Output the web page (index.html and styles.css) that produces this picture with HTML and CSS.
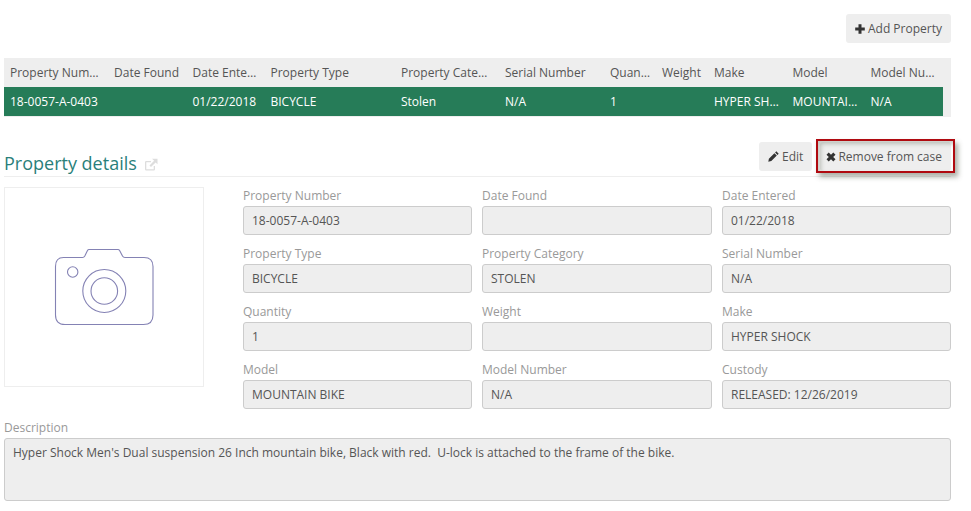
FILE: index.html
```html
<!DOCTYPE html>
<html lang="en">
<head>
<meta charset="utf-8">
<title>Property details</title>
<link rel="stylesheet" href="styles.css">
</head>
<body>
<main class="page">
  <div class="toolbar">
    <button class="btn" type="button"><svg class="ico" viewBox="0 0 10 10"><path d="M3.500 0.200h3v3.300h3.300v3H6.500v3.300h-3V6.500H0.200v-3h3.300z"/></svg>Add Property</button>
  </div>
  <div class="grid">
    <div class="grid-rows">
      <div class="row head">
        <span>Property Number</span><span>Date Found</span><span>Date Entered</span><span>Property Type</span><span>Property Category</span><span>Serial Number</span><span class="tight">Quantity</span><span>Weight</span><span>Make</span><span>Model</span><span>Model Number</span>
      </div>
      <div class="row sel">
        <span>18-0057-A-0403</span><span></span><span>01/22/2018</span><span>BICYCLE</span><span>Stolen</span><span>N/A</span><span>1</span><span></span><span>HYPER SHOCK</span><span>MOUNTAIN BIKE</span><span>N/A</span>
      </div>
    </div>
    <div class="gutter"></div>
  </div>
  <div class="details-head">
    <h2 class="title">Property details<svg class="ext" viewBox="0 0 14 14"><path d="M11 8v3.200A1.300 1.300 0 0 1 9.700 12.500H2.300A1.300 1.300 0 0 1 1 11.200V4.300A1.300 1.300 0 0 1 2.300 3H7V4.300H2.300V11.200H9.700V8zM8 0.800h5.500v5.500L11.600 4.400 7 9 5.500 7.500 10.100 2.700z"/></svg></h2>
    <div class="actions">
      <button class="btn btn-edit" type="button"><svg class="ico ico-lg" viewBox="0 0 11 11"><path d="M8.300 0.300 10.700 2.700 9.500 3.900 7.100 1.500zM6.400 2.200 8.800 4.600 3.300 10.100 0.300 10.700 0.900 7.700z"/></svg>Edit</button>
      <span class="callout"><button class="btn btn-remove" type="button"><svg class="ico ico-x" viewBox="0 0 10 10"><path d="M2.700 0.500 5 2.800 7.300 0.500 9.500 2.700 7.200 5 9.500 7.300 7.300 9.500 5 7.200 2.700 9.500 0.500 7.300 2.800 5 0.500 2.700z"/></svg>Remove from case</button></span>
    </div>
  </div>
  <div class="details">
    <div class="photo">
      <svg class="cam" viewBox="0 0 100 78" fill="none">
        <path d="M9.500 9.500H28.500Q30 9.500 30.800 8L33.500 2.500Q34 1.500 35 1.500H64Q65 1.500 65.600 2.500L68.500 8Q69.300 9.500 71 9.500H90Q99 9.500 99 18.500V67Q99 76.500 89.500 76.500H11Q1.500 76.500 1.500 67V18.500Q1.500 9.500 9.500 9.500Z"/>
        <circle cx="18.700" cy="24" r="5.200"/>
        <circle cx="50.300" cy="43" r="21.500"/>
        <circle cx="50.300" cy="43" r="13.300"/>
      </svg>
    </div>
    <div class="fields">
      <div class="field"><label>Property Number</label><div class="input">18-0057-A-0403</div></div>
      <div class="field"><label>Date Found</label><div class="input"></div></div>
      <div class="field"><label>Date Entered</label><div class="input">01/22/2018</div></div>
      <div class="field"><label>Property Type</label><div class="input">BICYCLE</div></div>
      <div class="field"><label>Property Category</label><div class="input">STOLEN</div></div>
      <div class="field"><label>Serial Number</label><div class="input">N/A</div></div>
      <div class="field"><label>Quantity</label><div class="input">1</div></div>
      <div class="field"><label>Weight</label><div class="input"></div></div>
      <div class="field"><label>Make</label><div class="input">HYPER SHOCK</div></div>
      <div class="field"><label>Model</label><div class="input">MOUNTAIN BIKE</div></div>
      <div class="field"><label>Model Number</label><div class="input">N/A</div></div>
      <div class="field"><label>Custody</label><div class="input">RELEASED: 12/26/2019</div></div>
    </div>
  </div>
  <div class="field desc">
    <label>Description</label>
    <div class="input area">Hyper Shock Men's Dual suspension 26 Inch mountain bike, Black with red.&nbsp; U-lock is attached to the frame of the bike.</div>
  </div>
</main>
</body>
</html>
```
FILE: styles.css
```css
* { box-sizing: border-box; }
html, body { margin: 0; padding: 0; background: #fff; }
body { font-family: "Open Sans", sans-serif; font-size: 12px; color: #555; overflow: hidden; }
.page { width: 971px; height: 511px; padding: 14px 20px 0 4px; }
.toolbar { display: flex; justify-content: flex-end; height: 44px; }
.btn {
  display: inline-flex; align-items: center; height: 29px; padding: 0 9px;
  border: 0; border-radius: 3px; background: #eee; color: #555;
  font: 12px "Open Sans", sans-serif; white-space: nowrap;
}
.btn-remove { padding-left: 6px; }
.ico { width: 10px; height: 10px; margin-right: 3px; fill: #333; flex: none; }
.ico-lg { width: 11px; height: 11px; }
.ico-x { margin-right: 2px; }
.grid { display: flex; background: #eee; height: 59px; border-bottom: 1px solid #eee; }
.grid-rows { width: 939px; }
.gutter { flex: 1; }
.row {
  display: grid; height: 29px; align-items: center;
  grid-template-columns: 104px 78.5px 78px 130.5px 104px 105px 52px 52px 78.5px 78px 78.5px;
}
.row span { padding: 0 6px; overflow: hidden; white-space: nowrap; text-overflow: ellipsis; }
.row .tight { padding-right: 3px; }
.head { background: #eee; }
.sel { background: #267c58; color: #fff; }
.details-head {
  display: flex; justify-content: space-between; align-items: flex-end;
  margin-top: 25px; height: 35px; border-bottom: 1px solid #eee;
}
.title { margin: 0 0 1px; font-size: 18px; font-weight: 400; line-height: 24px; color: #2a7f7a; display: flex; align-items: center; }
.ext { width: 14px; height: 14px; margin: 3px 0 0 7px; fill: #ddd; }
.actions { display: flex; gap: 8px; align-self: flex-start; margin-top: 0; }
.callout { position: relative; display: block; }
.callout::after {
  content: ""; position: absolute; left: -4px; right: -4px; top: -3px; bottom: -2px;
  border: 2px solid #b00a10;
  box-shadow: 3px 4px 5px rgba(70, 80, 60, .45), inset 3px 3px 4px rgba(70, 80, 60, .3);
  pointer-events: none;
}
.details { display: flex; gap: 39px; margin-top: 10px; }
.photo {
  width: 200px; height: 200px; border: 1px solid #eee;
  display: flex; align-items: center; justify-content: center; flex: none;
}
.cam { display: block; width: 100px; height: 78px; overflow: visible; }
.cam path, .cam circle { stroke: #8482b4; stroke-width: 1.100; }
.fields { flex: 1; display: grid; grid-template-columns: 229px 230px 229px; column-gap: 10px; row-gap: 10px; }
.field label { display: block; height: 19px; line-height: 18px; color: #999; }
.input {
  height: 29px; padding: 0 8px; line-height: 27px; background: #eee;
  border: 1px solid #ccc; border-radius: 3px; color: #555; white-space: nowrap; overflow: hidden;
}
.desc { margin-top: 10px; }
.area { height: 63px; line-height: 16px; padding-top: 6px; }
```
